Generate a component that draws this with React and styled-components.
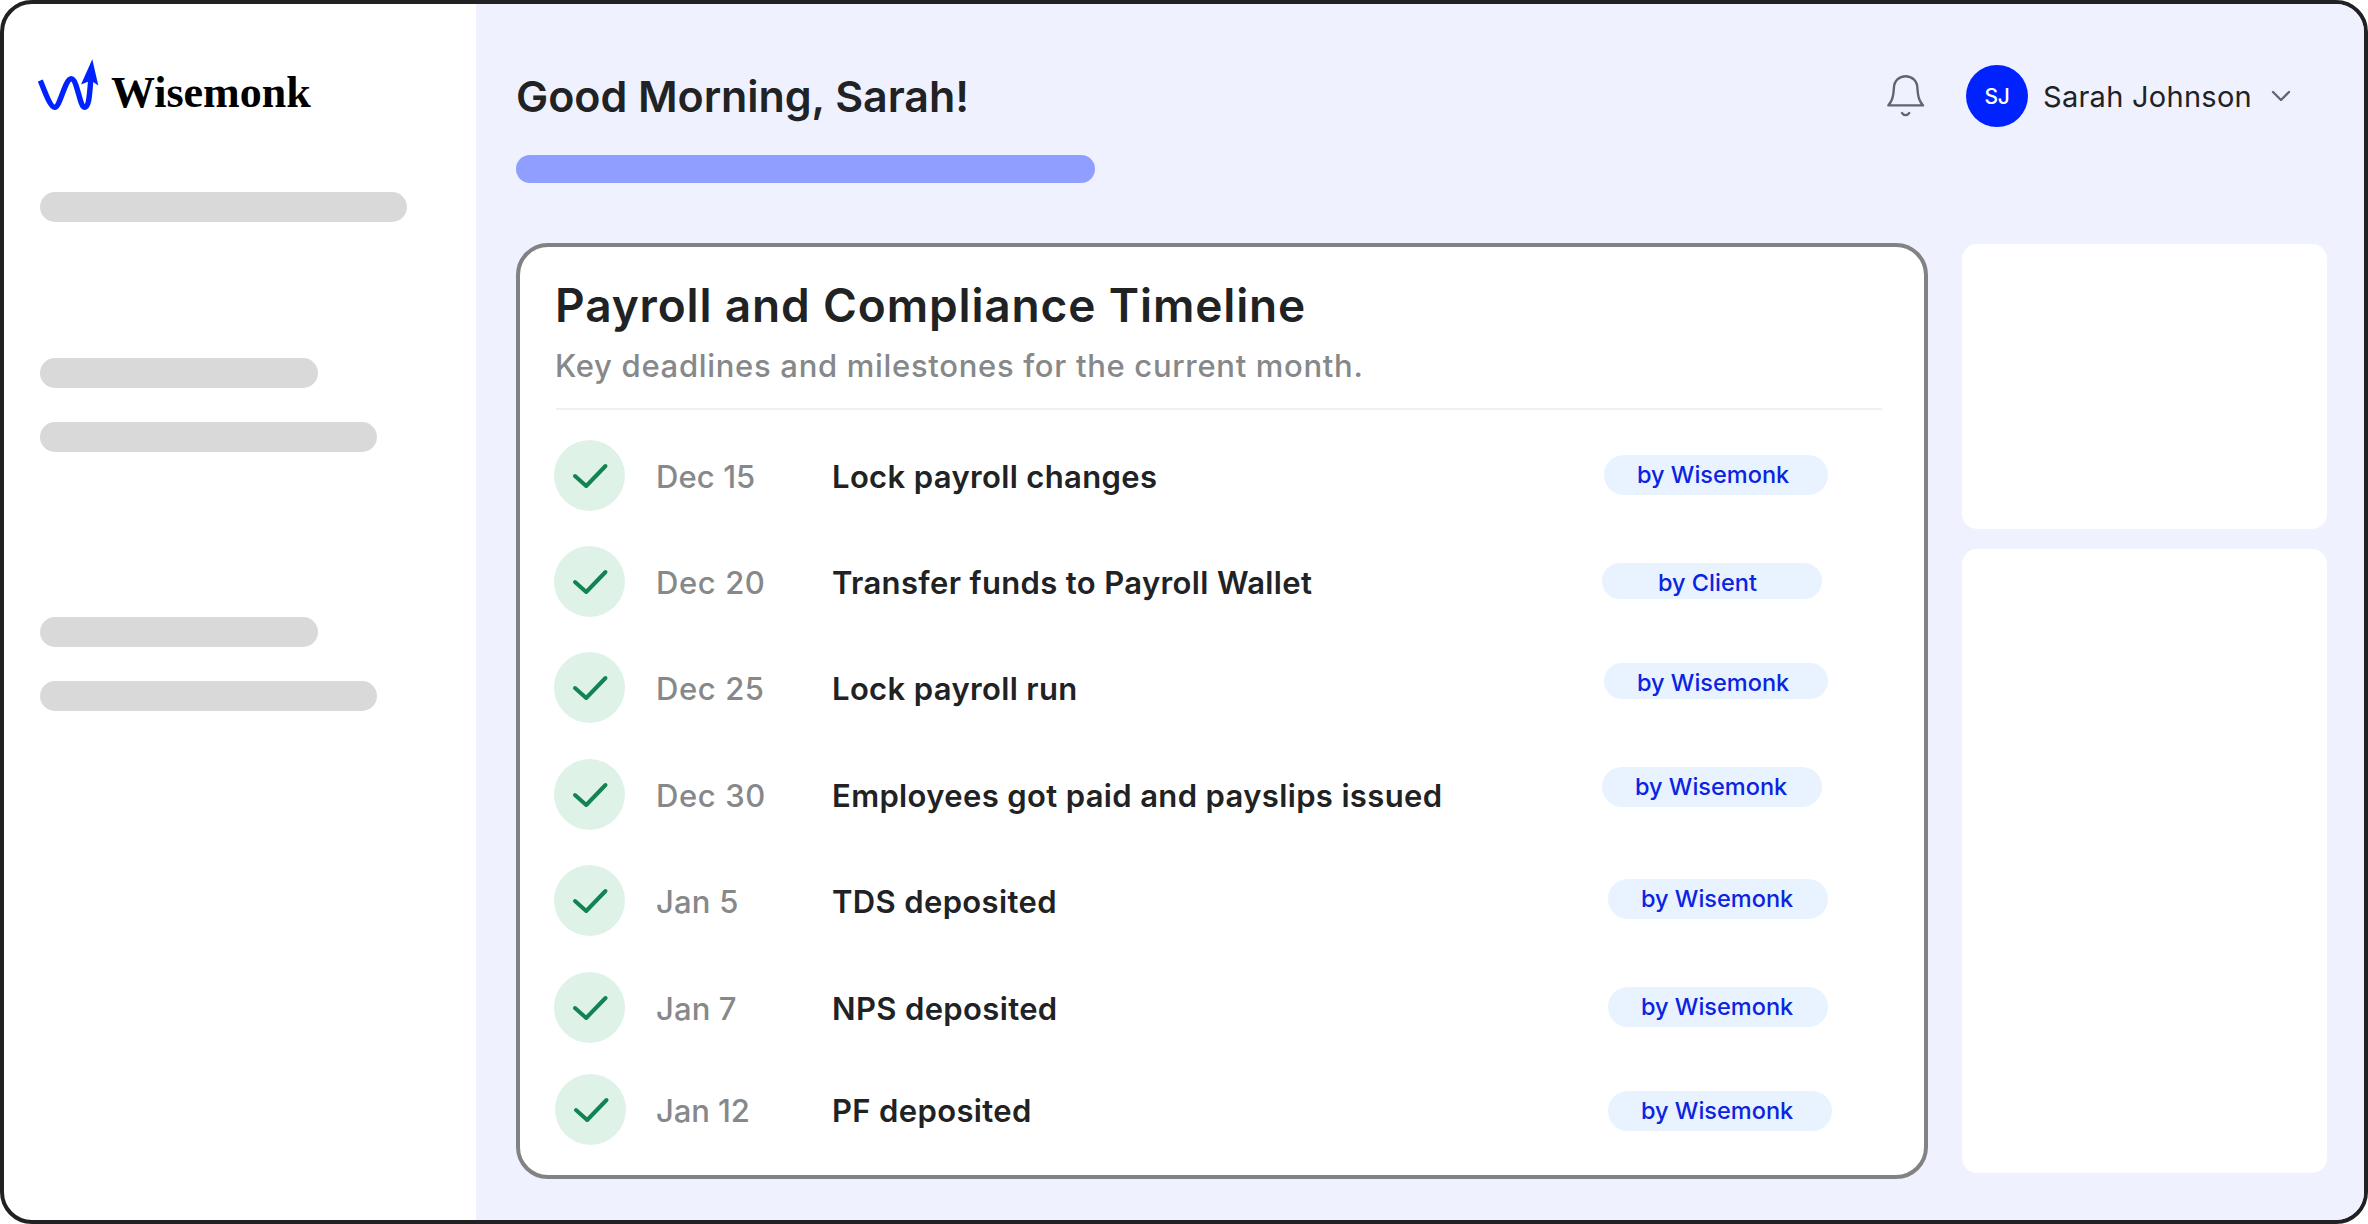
import styled, { createGlobalStyle } from 'styled-components';

const GlobalStyle = createGlobalStyle`
  * {
    box-sizing: border-box;
  }

  body {
    margin: 0;
    background: #fff;
    font-family: Inter, "Liberation Sans", sans-serif;
    color: #212224;
  }
`;

const Frame = styled.div`
  display: flex;
  width: 2368px;
  height: 1224px;
  border: 4px solid #212124;
  border-radius: 32px;
  background: #fff;
  overflow: hidden;
`;

const Sidebar = styled.aside`
  width: 472px;
  flex-shrink: 0;
  padding: 53px 36px 0;
`;

const Brand = styled.div`
  display: flex;
  align-items: flex-end;
  gap: 11px;
  height: 56px;
  margin: 0 0 79px -2px;
  font-family: "Liberation Serif", serif;
  font-weight: 700;
  font-size: 44px;
  line-height: 40px;
  color: #000;

  svg {
    display: block;
    flex-shrink: 0;
  }
`;

const NavPlaceholder = styled.div`
  width: ${({ $width }) => $width}px;
  height: 30px;
  margin-top: ${({ $top }) => $top || 0}px;
  border-radius: 15px;
  background: #d9d9d9;
`;

const Main = styled.main`
  flex: 1;
  padding: 61px 37px 0 40px;
  background: #eff1ff;
`;

const Header = styled.header`
  display: flex;
  align-items: center;
  height: 62px;
  padding-right: 36px;
`;

const Greeting = styled.h1`
  margin: 0 auto 0 0;
  font-size: 43px;
  font-weight: 600;
  line-height: 60px;
  letter-spacing: -0.06px;
`;

const BellButton = styled.button`
  display: flex;
  margin-right: 39px;
  padding: 0;
  border: none;
  background: transparent;
`;

const Avatar = styled.div`
  display: flex;
  align-items: center;
  justify-content: center;
  width: 62px;
  height: 62px;
  border-radius: 50%;
  background: #0022ff;
  color: #fff;
  font-size: 21px;
  font-weight: 500;
  letter-spacing: -0.4px;
`;

const UserName = styled.span`
  width: 228px;
  margin-left: 15px;
  padding-top: 2px;
  font-size: 29px;
  font-weight: 400;
  line-height: 40px;
  letter-spacing: 0.27px;
  white-space: nowrap;
`;

const SummaryBar = styled.div`
  width: 579px;
  height: 28px;
  margin: 28px 0 60px;
  border-radius: 14px;
  background: #8f9eff;
`;

const Content = styled.div`
  display: flex;
  gap: 34px;
`;

const Card = styled.section`
  width: 1412px;
  height: 936px;
  padding: 28px 42px 0 34px;
  border: 4px solid #808382;
  border-radius: 32px;
  background: #fff;
`;

const Title = styled.h2`
  margin: 0 0 0 1px;
  font-size: 46px;
  font-weight: 600;
  line-height: 60px;
  letter-spacing: 0.86px;
`;

const Subtitle = styled.p`
  margin: 11px 0 22px 1px;
  font-size: 31px;
  font-weight: 500;
  line-height: 40px;
  letter-spacing: 0.69px;
  color: #86888a;
`;

const Divider = styled.hr`
  height: 2px;
  margin: 0 0 0 2px;
  border: none;
  background: #f0f0f2;
`;

const Timeline = styled.ul`
  display: flex;
  flex-direction: column;
  gap: 35.4px;
  margin: 0;
  padding: 29.6px 0 0;
  list-style: none;
`;

const Status = styled.span`
  display: flex;
  width: 71px;
  height: 71px;
  border-radius: 50%;
  background: #def2e7;
`;

const Row = styled.li`
  display: grid;
  grid-template-columns: 102px 176px 770px auto;
  align-items: center;
  height: 71px;

  &:last-child {
    margin-top: -4px;

    ${Status} {
      margin-left: 1px;
    }
  }
`;

const RowDate = styled.span`
  padding-top: 2px;
  font-size: 31px;
  font-weight: 500;
  letter-spacing: ${({ $spacing }) => $spacing}px;
  color: #86888a;
`;

const RowTitle = styled.span`
  padding-top: 2px;
  font-size: 31px;
  font-weight: 600;
  letter-spacing: 0.36px;
  white-space: nowrap;
`;

const Owner = styled.span`
  width: ${({ $width }) => $width}px;
  height: ${({ $height }) => $height || 40}px;
  margin-left: ${({ $left }) => $left || 0}px;
  margin-top: ${({ $top }) => $top || 0}px;
  padding-left: ${({ $indent }) => $indent || 33}px;
  border-radius: 20px;
  background: #e9f2ff;
  color: #0a24e0;
  font-size: 23.5px;
  font-weight: 500;
  line-height: 39px;
  white-space: nowrap;
`;

const SideColumn = styled.div`
  display: flex;
  flex-direction: column;
  gap: 20px;
  width: 365px;
  padding-top: 1px;
`;

const SidePanel = styled.div`
  height: ${({ $height }) => $height}px;
  border-radius: 15px;
  background: #fff;
`;

const rows = [
  { date: 'Dec 15', spacing: 0.1, title: 'Lock payroll changes', owner: 'by Wisemonk', pill: { $left: 2, $width: 224 } },
  { date: 'Dec 20', spacing: 0.6, title: 'Transfer funds to Payroll Wallet', owner: 'by Client', pill: { $width: 220, $height: 36, $top: -1, $indent: 56 } },
  { date: 'Dec 25', spacing: 0.6, title: 'Lock payroll run', owner: 'by Wisemonk', pill: { $left: 2, $width: 224, $height: 36, $top: -13 } },
  { date: 'Dec 30', spacing: 0.6, title: 'Employees got paid and payslips issued', owner: 'by Wisemonk', pill: { $width: 220, $top: -15 } },
  { date: 'Jan 5', spacing: 0.2, title: 'TDS deposited', owner: 'by Wisemonk', pill: { $left: 6, $width: 220, $top: -3 } },
  { date: 'Jan 7', spacing: 0.1, title: 'NPS deposited', owner: 'by Wisemonk', pill: { $left: 6, $width: 220 } },
  { date: 'Jan 12', spacing: -0.1, title: 'PF deposited', owner: 'by Wisemonk', pill: { $left: 6, $width: 224, $top: 3 } },
];

const LogoMark = () => (
  <svg width="62" height="56" viewBox="8 6 62 56" fill="none">
    <path
      d="M10.3 29.5C14 38 20 56.3 24.7 56.3C30 56.3 35 27.7 41.3 27.7C47 27.7 50 56.3 54.3 56.3C59 56.3 59.5 45 60.8 28"
      stroke="#0022ff"
      strokeWidth="5.4"
    />
    <path d="M62.3 8.3L68.3 34.5L61 29.5L51 33.5Z" fill="#0022ff" />
  </svg>
);

const BellIcon = () => (
  <svg width="43" height="46" viewBox="4 8 43 46" fill="none" stroke="#62646f" strokeWidth="2.4" strokeLinecap="round" strokeLinejoin="round">
    <path d="M8.3 40.4H43C39.5 36 38 33 37.4 23C37.2 16 32 11.2 25.6 11.2C19.2 11.2 14.1 16 13.9 23C13.3 33 11.8 36 8.3 40.4Z" />
    <path d="M22 48C23.6 50.8 27.6 50.8 29.2 48" />
  </svg>
);

const ChevronIcon = () => (
  <svg width="20" height="12" viewBox="0 0 20 12" fill="none" stroke="#62646f" strokeWidth="2.3" strokeLinecap="round" strokeLinejoin="round">
    <path d="M2 2L10 10L18 2" />
  </svg>
);

const CheckIcon = () => (
  <svg width="71" height="71" viewBox="0 0 71 71" fill="none" stroke="#128352" strokeWidth="4" strokeLinecap="round" strokeLinejoin="round">
    <path d="M21 36L32.2 46L51.5 26" />
  </svg>
);

export default function App() {
  return (
    <>
      <GlobalStyle />
      <Frame>
        <Sidebar>
          <Brand>
            <LogoMark />
            Wisemonk
          </Brand>
          <NavPlaceholder $width={367} />
          <NavPlaceholder $width={278} $top={136} />
          <NavPlaceholder $width={337} $top={34} />
          <NavPlaceholder $width={278} $top={165} />
          <NavPlaceholder $width={337} $top={34} />
        </Sidebar>
        <Main>
          <Header>
            <Greeting>Good Morning, Sarah!</Greeting>
            <BellButton aria-label="Notifications">
              <BellIcon />
            </BellButton>
            <Avatar>SJ</Avatar>
            <UserName>Sarah Johnson</UserName>
            <ChevronIcon />
          </Header>
          <SummaryBar />
          <Content>
            <Card>
              <Title>Payroll and Compliance Timeline</Title>
              <Subtitle>Key deadlines and milestones for the current month.</Subtitle>
              <Divider />
              <Timeline>
                {rows.map(({ date, spacing, title, owner, pill }) => (
                  <Row key={date}>
                    <Status>
                      <CheckIcon />
                    </Status>
                    <RowDate $spacing={spacing}>{date}</RowDate>
                    <RowTitle>{title}</RowTitle>
                    <Owner {...pill}>{owner}</Owner>
                  </Row>
                ))}
              </Timeline>
            </Card>
            <SideColumn>
              <SidePanel $height={285} />
              <SidePanel $height={624} />
            </SideColumn>
          </Content>
        </Main>
      </Frame>
    </>
  );
}
